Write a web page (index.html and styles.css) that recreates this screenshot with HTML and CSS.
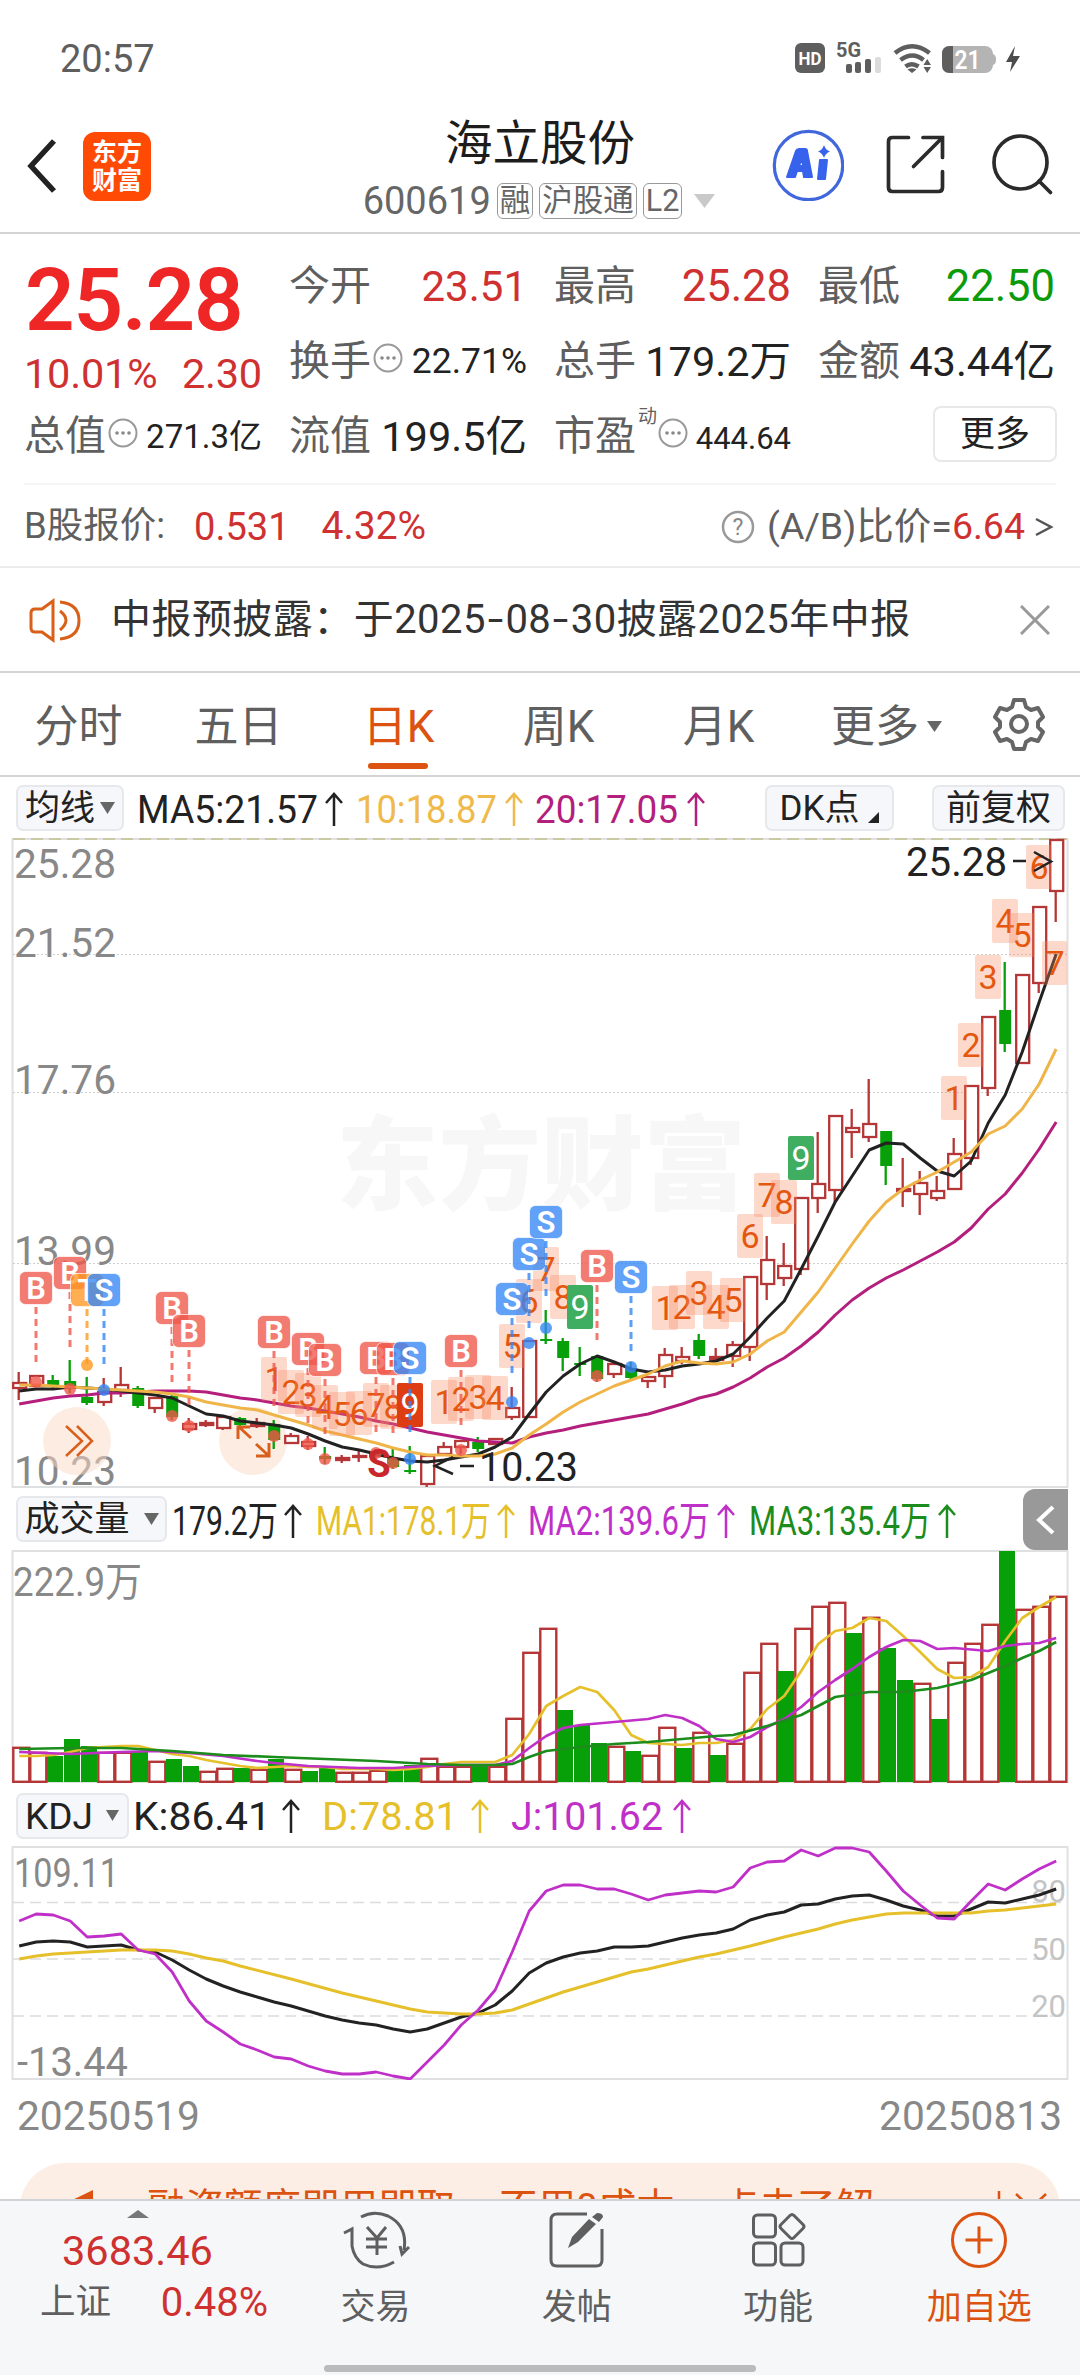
FILE: index.html
```html
<!DOCTYPE html>
<html lang="zh-CN">
<head>
<meta charset="utf-8">
<title>海立股份 600619</title>
<link rel="stylesheet" href="styles.css">
</head>
<body>
<div class="status">
  <span class="clock">20:57</span>
  <svg class="status-icons" width="232" height="36" viewBox="792 40 232 36">
    <rect x="795" y="43" width="30" height="30" rx="6" fill="#5e5e5e"/>
    <text x="810" y="65" font-size="19" font-weight="700" fill="#fff" text-anchor="middle" textLength="23" lengthAdjust="spacingAndGlyphs">HD</text>
    <text x="836" y="57" font-size="20" font-weight="700" fill="#5e5e5e" textLength="25" lengthAdjust="spacingAndGlyphs">5G</text>
    <g fill="#5e5e5e"><rect x="846" y="64" width="6" height="9" rx="2"/><rect x="855" y="62" width="6" height="11" rx="2"/><rect x="865" y="59" width="6" height="14" rx="2"/></g>
    <rect x="875" y="57" width="6" height="16" rx="2" fill="#dcdcdc"/>
    <g fill="none" stroke="#5e5e5e" stroke-width="4.500"><path d="M895 53q17-13.500 34.500 0M900.500 60q12-9 23 0"/><path d="M905.500 66.500q6-4.500 13 0"/></g>
    <path d="M907.500 69.500q4.500-2.500 9 0l-4.500 3.500zM923.500 65l3.700-6 3.800 6zM923.500 67h7.500l-3.800 6z" fill="#5e5e5e"/>
    <rect x="942" y="46" width="51" height="27" rx="8" fill="#b4b4b4"/><path d="M992 54q4 0 4 5.500t-4 5.500z" fill="#b4b4b4"/>
    <path d="M953 46v27h-3q-8 0-8-8v-11q0-8 8-8z" fill="#5e5e5e"/>
    <text x="967.500" y="69" font-size="26" font-weight="600" fill="#fff" text-anchor="middle" textLength="26" lengthAdjust="spacingAndGlyphs">21</text>
    <path d="M1015 46l-9 16h6l-2 10 10-16h-7z" fill="#4c4c4c"/>
  </svg>
</div>
<header class="header">
  <svg class="back" width="40" height="62" viewBox="0 0 40 62"><path d="M34 6L11 31l23 25" fill="none" stroke="#222" stroke-width="5.500"/></svg>
  <div class="logo"><span>东方</span><span>财富</span></div>
  <div class="title">
    <h1>海立股份</h1>
    <div class="code"><span>600619</span><i>融</i><i>沪股通</i><i>L2</i><svg width="24" height="16"><path d="M1 1h21l-10.500 14z" fill="#c9c9c9"/></svg></div>
  </div>
  <div class="actions">
    <svg width="72" height="72" viewBox="772 130 72 72"><circle cx="808.500" cy="166.500" r="34.200" fill="none" stroke="#4067dc" stroke-width="3.200"/>
      <g fill="#3762ec" stroke="#3762ec" stroke-width="2" stroke-linejoin="round"><path fill-rule="evenodd" d="M787 178l9-26q1-2 3-2h6q2 0 2 2l5 26h-8l-1-6h-6l-2 6zM799 167h4l-1-8zM820 161h7l-2 19h-7z"/></g><path d="M824 146q1.500 5 6 6.500-4.500 1.500-6 6.500-1.500-5-6-6.500 4.500-1.500 6-6.500z" fill="#3762ec"/></svg>
    <svg width="64" height="64" viewBox="885 135 64 64"><g fill="none" stroke="#2b2b2b" stroke-width="3.700" stroke-linecap="round"><path d="M909.500 139.500h-16q-4 0-4 4v46q0 4 4 4h46q4 0 4-4v-16"/><path d="M924 139.500h19.500v20M943 140l-28.500 28.500"/></g></svg>
    <svg width="68" height="68" viewBox="985 132 68 68"><g fill="none" stroke="#2b2b2b" stroke-width="3.700" stroke-linecap="round"><circle cx="1018.500" cy="163.500" r="26.500"/><path d="M1037 182l11.500 11.500"/></g></svg>
  </div>
</header>

<main>
<section class="quote">
  <div class="grid">
    <div class="price"><b>25.28</b><div class="chg"><span>10.01%</span><span>2.30</span></div></div>
    <div class="cell"><label>今开</label><span class="up">23.51</span></div>
    <div class="cell"><label>最高</label><span class="up full">25.28</span></div>
    <div class="cell"><label>最低</label><span class="down full">22.50</span></div>
    <div class="cell"><label>换手</label><svg class="dots" viewBox="0 0 30 30"><use href="#dots"/></svg><span class="mid">22.71%</span></div>
    <div class="cell"><label>总手</label><span class="wide">179.2万</span></div>
    <div class="cell"><label>金额</label><span class="wide">43.44亿</span></div>
    <div class="cell"><label>总值</label><svg class="dots" viewBox="0 0 30 30"><use href="#dots"/></svg><span class="cap">271.3亿</span></div>
    <div class="cell"><label>流值</label><span class="wide">199.5亿</span></div>
    <div class="cell"><label>市盈</label><sup>动</sup><svg class="dots" viewBox="0 0 30 30"><use href="#dots"/></svg><span class="small">444.64</span></div>
    <div class="cell end"><button class="more">更多</button></div>
  </div>
  <div class="bshare">
    <span>B股报价:</span><span class="up b1">0.531</span><span class="up b2">4.32%</span>
    <svg class="help" width="34" height="34" viewBox="0 0 34 34"><circle cx="17" cy="17" r="15" fill="none" stroke="#999" stroke-width="2.500"/><text x="17" y="25" font-size="23" fill="#888" text-anchor="middle">?</text></svg>
    <span class="ratio">(A/B)比价=<em>6.64</em></span>
    <svg width="20" height="24"><path d="M2 4l15 8-15 8" fill="none" stroke="#555" stroke-width="2.500"/></svg>
  </div>
</section>

<section class="notice">
  <svg width="54" height="48" viewBox="28 595 54 48"><g fill="none" stroke="#d86018" stroke-width="3"><path d="M53 600v39l-11-8h-7q-4 0-4-4v-15q0-4 4-4h7z"/><path d="M60 610q12 9 0 19M60 601q19 2 19 18.500T60 638"/></g></svg>
  <p>中报预披露：于2025<s>-</s>08<s>-</s>30披露2025年中报</p>
  <svg width="30" height="30"><path d="M1 1l28 28M29 1L1 29" stroke="#999" stroke-width="3"/></svg>
</section>

<nav class="tabs">
  <a>分时</a><a>五日</a><a class="on">日K</a><a>周K</a><a>月K</a><a>更多<svg width="16" height="13"><path d="M0 1h15l-7.500 11z" fill="#666"/></svg></a>
  <svg class="gear" width="58" height="58" viewBox="-29 -29 58 58"><g fill="none" stroke="#666" stroke-width="4" stroke-linejoin="round"><path d="M-5-24H5L7-17 12-14 19-16 24-7 19-2V3L24 8 19 17 12 15 7 18 5 25H-5L-7 18-12 15-19 17-24 8-19 3V-2L-24-7-19-16-12-14-7-17Z"/><circle r="8"/></g></svg>
</nav>

<div class="legend">
  <button class="pill w1">均线<svg width="15" height="13"><path d="M0 0h15l-7.500 12z" fill="#666"/></svg></button>
  <svg id="lg-ma" width="628" height="46" viewBox="131 785 628 46"></svg>
  <button class="pill w2">DK点<svg class="corner" width="11" height="11"><path d="M11 0v11H0z" fill="#222"/></svg></button>
  <button class="pill w3">前复权</button>
</div>
<svg class="panel" id="kline" width="1080" height="650" viewBox="0 839 1080 650"></svg>
<div class="legend vol">
  <button class="pill w4">成交量<svg width="15" height="13"><path d="M0 0h15l-7.500 12z" fill="#666"/></svg></button>
  <svg id="lg-vol" width="852" height="46" viewBox="171 1497 852 46"></svg>
  <div class="fold"><svg width="22" height="32"><path d="M18 3L4 16l14 13" fill="none" stroke="#fff" stroke-width="4"/></svg></div>
</div>
<svg class="panel" id="volume" width="1080" height="233" viewBox="0 1551 1080 233"></svg>
<div class="legend kdjl">
  <button class="pill w5">KDJ<svg width="14" height="12"><path d="M0 0h13l-6.500 11z" fill="#666"/></svg></button>
  <svg id="lg-kdj" width="900" height="46" viewBox="131 1794 900 46"></svg>
</div>
<svg class="panel" id="kdj" width="1080" height="234" viewBox="0 1847 1080 234"></svg>
<div class="dates"><span>20250519</span><span>20250813</span></div>
<div class="promo-clip"><div class="promo">
  <svg width="32" height="24"><path d="M0 16L31 1v22z" fill="#dc5210"/></svg>
  <span class="p1">融资额度即用即取，</span><span class="p2">不用0成本，</span><span class="p3">点击了解&gt;</span>
  <svg class="px" width="56" height="34"><path d="M3 2v30M20 5l30 28M50 5L20 33" stroke="#dc5210" stroke-width="2.500"/></svg>
</div></div>
</main>

<footer class="bottom">
  <div class="index"><svg width="22" height="8"><path d="M0 8L11 0l11 8z" fill="#777"/></svg><b>3683.46</b><div><span>上证</span><em>0.48%</em></div></div>
  <div class="item"><svg width="70" height="60" viewBox="340 2210 70 60"><g fill="none" stroke="#5f5f5f" stroke-width="3"><path d="M360 2217q13-7 27-1 20 10 16 34M343 2233l8-4v17q2 12 11 18 15 7 31-2M408 2247l-7 7-2-8"/><path d="M366 2227l10 11 9-11M376 2238v17M365 2239h21M365 2247h21"/></g></svg><span>交易</span></div>
  <div class="item"><svg width="60" height="60" viewBox="548 2210 60 60"><path d="M588 2214h-30q-6 0-6 6v40q0 6 6 6h39q6 0 6-6v-31" fill="none" stroke="#5f5f5f" stroke-width="3"/><path d="M569 2248l4-11 17-18 7 5-18 18zM593 2217l5-4q6 0 6 4l-4 5z" fill="#5f5f5f"/></svg><span>发帖</span></div>
  <div class="item"><svg width="60" height="60" viewBox="748 2210 60 60"><g fill="none" stroke="#5f5f5f" stroke-width="3"><rect x="753.500" y="2215" width="22" height="22" rx="4"/><rect x="753.500" y="2243" width="22" height="22" rx="4"/><rect x="781" y="2243" width="22" height="22" rx="4"/><path d="M790 2215.500q2-2 4 0l9 9q2 2 0 4l-9 9q-2 2-4 0l-9-9q-2-2 0-4z"/></g></svg><span>功能</span></div>
  <div class="item fav"><svg width="60" height="60" viewBox="949 2210 60 60"><g fill="none" stroke="#dc5210" stroke-width="3"><circle cx="979" cy="2240" r="26.500"/><path d="M965.500 2240h27M979 2226.500v27"/></g></svg><span>加自选</span></div>
  <div class="home"></div>
</footer>
<svg width="0" height="0" class="defs"><defs><g id="dots"><circle cx="15" cy="15" r="13.500" fill="none" stroke="#999" stroke-width="2"/><circle cx="9" cy="15" r="1.800" fill="#888"/><circle cx="15" cy="15" r="1.800" fill="#888"/><circle cx="21" cy="15" r="1.800" fill="#888"/></g></defs></svg>
<script src="charts.js"></script>
</body>
</html>
```
FILE: styles.css
```css
* { box-sizing: border-box; }
body { margin: 0; width: 1080px; height: 2376px; overflow: hidden; background: #fff; color: #222; font-family: Roboto, "Noto Sans CJK SC", sans-serif; line-height: 1; }
svg { display: block; flex: none; }
svg text { font-family: Roboto, "Noto Sans CJK SC", sans-serif; }
button { font: inherit; color: inherit; padding: 0; }
em, i { font-style: normal; }
.defs { display: none; }
.up, em { color: #cf3030; }
.down { color: #0a9a0a; }

.status { height: 96px; padding: 40px 56px 0 60px; display: flex; justify-content: space-between; }
.clock { font-size: 38px; color: #5e5e5e; }

.header { height: 138px; border-bottom: 2px solid #d4d4d4; display: grid; grid-template-columns: 290px 500px 290px; grid-template-areas: "l t a"; }
.header .back { grid-area: l; margin: 39px 0 0 20px; }
.logo { grid-area: l; margin: 36px 0 0 83px; width: 68px; height: 69px; border-radius: 12px; background: #ff4a05; color: #fff; font-size: 25px; font-weight: 700; display: flex; flex-direction: column; align-items: center; justify-content: center; gap: 3px; }
.title { grid-area: t; display: flex; flex-direction: column; align-items: center; }
.title h1 { margin: 24px 0 0; font-size: 47.500px; font-weight: 400; line-height: 48px; color: #1c1c1c; }
.code { display: flex; align-items: center; gap: 6px; margin: 14px 0 0 0; height: 38px; font-size: 38px; color: #666; }
.code i { font-size: 30.500px; line-height: 33px; height: 36px; padding: 0 2px; border: 1.500px solid #999; border-radius: 6px; white-space: nowrap; }
.code svg { margin-left: 5px; }
.actions { grid-area: a; display: flex; align-items: center; margin: 2px 25px 0 -18px; justify-content: space-between; }

.quote { height: 334px; padding: 0 24px; border-bottom: 2px solid #ebebeb; }
.grid { height: 251px; border-bottom: 2px solid #f5f5f5; padding: 15px 0 9px; display: grid; grid-template-columns: 238px 238px 237px 237px; column-gap: 27px; grid-template-rows: 75px 75px 75px; }
.price { grid-row: span 2; color: #cf3030; }
.price b { display: block; font-size: 87px; font-weight: 600; color: #ef2626; line-height: 88px; margin: 7px 0 0 1px; letter-spacing: -1.200px; }
.chg { display: flex; justify-content: space-between; font-size: 41.500px; margin-top: 9px; letter-spacing: -.2px; }
.cell { display: flex; align-items: center; font-size: 42px; min-width: 0; white-space: nowrap; }
.cell label { font-size: 41px; color: #5f5f5f; }
.cell > span { margin-left: auto; }
.cell .full { font-size: 43.500px; }
.cell .mid { font-size: 35.500px; }
.cell .cap { font-size: 33px; }
.cell .small { font-size: 31px; margin-top: 3px; }
.cell .wide { font-size: 41.500px; }
.dots { width: 30px; height: 30px; margin: -8px 0 0 2px; }
.cell sup { font-size: 19px; color: #5f5f5f; margin: -40px 0 0 2px; }
.cell sup + .dots { margin-left: 1px; }
.end { justify-content: flex-end; }
.more { width: 124px; height: 56px; margin: -5px -2px 0 0; border: 2px solid #e8e8e8; border-radius: 8px; background: #fff; font-size: 35px; color: #222; }
.bshare { height: 81px; display: flex; align-items: center; font-size: 39px; color: #5f5f5f; padding: 2px 2px 0 0; white-space: nowrap; }
.bshare span:first-child { font-size: 36.500px; }
.bshare .b1 { margin-left: 29px; font-size: 38px; }
.bshare .b2 { margin-left: 32px; }
.help { margin-left: auto; margin-right: 12px; }
.ratio { margin-right: 9px; font-size: 37.500px; }

.notice { height: 105px; border-bottom: 2px solid #d4d4d4; display: flex; align-items: center; padding: 0 30px 0 28px; }
.notice p { margin: 0 auto 0 29px; font-size: 40px; letter-spacing: .45px; color: #333; }
.notice s { display: inline-block; text-decoration: none; transform: scaleX(1.4); margin: 0 4px; }

.tabs { height: 104px; border-bottom: 2px solid #d4d4d4; display: grid; grid-template-columns: repeat(5, 160px) 170px auto; color: #5f5f5f; font-size: 44px; }
.tabs a { display: flex; justify-content: center; align-items: center; height: 103px; padding: 4px 3px 0 0; gap: 8px; white-space: nowrap; position: relative; }
.tabs a:nth-child(6) { margin-left: 7px; }
.tabs .on { color: #dc5210; }
.tabs .on::after { content: ""; position: absolute; left: 48px; bottom: 7px; width: 60px; height: 6px; border-radius: 3px; background: #dc5210; }
.tabs .gear { margin: 22px 0 0 20px; }

.legend { height: 61px; padding: 8px 16px 0; display: flex; }
.pill { height: 46px; background: #f6f7fa; border: 2px solid #e7e8ec; border-radius: 7px; display: flex; align-items: center; justify-content: center; font-size: 35px; color: #222; flex: none; white-space: nowrap; gap: 5px; }
.w1 { width: 108px; margin-right: 7px; }
.w2 { width: 129px; margin: 0 38px 0 6px; gap: 9px; }
.w3 { width: 133px; }
.corner { align-self: flex-end; margin-bottom: 6px; }
.vol { height: 62px; padding: 8px 12px 0 16px; }
.w4 { width: 151px; margin-right: 4px; gap: 14px; }
.fold { width: 45px; height: 61px; margin-top: -7px; background: #999; border-radius: 12px 0 0 12px; display: flex; align-items: center; justify-content: center; flex: none; }
.kdjl { height: 63px; padding-top: 10px; }
.w5 { width: 113px; margin-right: 2px; gap: 13px; font-size: 37px; }
.dates { height: 83px; padding: 16px 18px 0 17px; display: flex; justify-content: space-between; font-size: 40.700px; color: #888; }
.promo-clip { height: 36px; overflow: hidden; padding: 0 20px; }
.promo { height: 90px; border-radius: 48px; background: #fceee5; color: #dc5210; display: flex; align-items: flex-start; padding: 26px 8px 0 42px; font-size: 38.500px; white-space: nowrap; }
.p1 { margin-left: 53px; width: 352px; }
.p2 { width: 229px; }
.promo .p3 { margin-left: -8px; }
.px { margin-left: auto; }

.bottom { height: 176px; background: #f6f7f9; border-top: 2px solid #d0d2d5; position: relative; display: grid; grid-template-columns: 275px repeat(4, 201.200px); }
.index { display: flex; flex-direction: column; align-items: center; padding-top: 9px; color: #cf3030; }
.index b { font-weight: 400; font-size: 41.500px; margin-top: 12px; }
.index div { display: flex; justify-content: space-between; align-items: center; width: 228px; margin: 11px -33px 0 40px; font-size: 40px; align-self: flex-start; }
.index span { color: #5f5f5f; font-size: 35.500px; }
.item { display: flex; flex-direction: column; align-items: center; padding-top: 9px; font-size: 35px; color: #5f5f5f; }
.item span { margin-top: 20px; }
.fav { color: #dc5210; }
.home { position: absolute; left: 324px; bottom: 3px; width: 432px; height: 7px; border-radius: 4px; background: #b9bbbd; }
```
FILE: charts.js
```js
var STEP = 17, X0 = 19.2;
var RED = '#b53636', GREEN = '#08a008', BLACK = '#222';
function x(i) { return X0 + STEP * i; }
function text(s, tx, y, w, size, fill, extra) {
  return '<text x="' + tx + '" y="' + y + '" font-size="' + size + '" fill="' + fill + '"' +
    (w ? ' textLength="' + w + '" lengthAdjust="spacingAndGlyphs"' : '') + ' ' + (extra || '') + '>' + s + '</text>';
}
function path(d, stroke, w, extra) {
  return '<path d="' + d + '" fill="none" stroke="' + stroke + '" stroke-width="' + w + '" ' + (extra || '') + '/>';
}
function line(pts, color, w) {
  return path('M' + pts.map(function (p) { return x(p[0]) + ' ' + p[1]; }).join('L'), color, w || 3, 'stroke-linejoin="round"');
}
function series(arr) { return arr.map(function (v, i) { return [i, v]; }); }
function arrow(cx, top, bottom, color) {
  return path('M' + cx + ' ' + bottom + 'V' + (top + 1) + 'M' + (cx - 8) + ' ' + (top + 10) + 'L' + cx + ' ' + (top + 1) + 'L' + (cx + 8) + ' ' + (top + 10), color, 2.5);
}
function put(id, s) { document.getElementById(id).innerHTML = s; }
function frame(y, h) { return '<rect x="12.5" y="' + y + '" width="1055" height="' + h + '" fill="none" stroke="#dfe0e2" stroke-width="2"/>'; }

/* legends */
function legend(id, items, base, size) {
  put(id, items.map(function (t) {
    return text(t[0], t[1], base, t[2], size, t[4]) + arrow(t[3], base - 30, base + 3, t[4]);
  }).join(''));
}
legend('lg-ma', [['MA5:21.57', 137, 181, 334, BLACK], ['10:18.87', 356, 141, 514, '#efba4b'], ['20:17.05', 535, 143, 696, '#b41e7c']], 823, 38);
legend('lg-vol', [['179.2万', 172, 106, 293, BLACK], ['MA1:178.1万', 316, 175, 506, '#e5c02a'], ['MA2:139.6万', 528, 182, 726, '#c030c8'], ['MA3:135.4万', 749, 182, 947, '#1c8c1c']], 1536, 40);
legend('lg-kdj', [['K:86.41', 133, 138, 291, BLACK], ['D:78.81', 322, 136, 480, '#e5c02a'], ['J:101.62', 511, 152, 682, '#c030c8']], 1831, 39);

/* candles: colour, high, body top, body bottom, low */
var candles = [['r',1373,1384,1389,1401],['r',1377,1377,1387,1387],['g',1376,1381,1386,1389],['g',1361,1382,1390,1394],['g',1378,1398,1404,1406],['r',1379,1393,1403,1407],['r',1368,1386,1391,1398],['g',1387,1389,1407,1409],['r',1398,1399,1409,1414],['g',1395,1397,1418,1421],['r',1419,1425,1430,1434],['r',1421,1424,1426,1428],['r',1417,1418,1429,1431],['g',1418,1419,1426,1429],['r',1419,1424,1427,1429],['g',1421,1425,1441,1450],['r',1434,1437,1444,1445],['r',1437,1443,1447,1451],['g',1448,1457,1460,1465],['r',1456,1459,1461,1464],['r',1452,1457,1458,1463],['r',1450,1453,1457,1460],['g',1448,1459,1468,1470],['g',1447,1471,1473,1475],['r',1457,1457,1485,1488],['r',1443,1448,1455,1456],['r',1441,1442,1448,1455],['g',1438,1443,1450,1453],['r',1439,1440,1445,1446],['r',1388,1409,1418,1421],['r',1342,1342,1418,1418],['g',1311,1340,1342,1345],['g',1339,1342,1359,1372],['g',1348,1364,1366,1377],['g',1356,1357,1380,1383],['r',1363,1365,1375,1379],['g',1363,1369,1379,1381],['r',1377,1378,1382,1389],['r',1349,1356,1377,1389],['r',1348,1358,1362,1365],['g',1335,1341,1357,1360],['r',1349,1358,1361,1363],['r',1342,1346,1357,1368],['r',1278,1278,1348,1362],['r',1237,1261,1285,1301],['r',1244,1267,1279,1287],['r',1198,1199,1270,1276],['r',1133,1185,1199,1214],['r',1117,1117,1191,1203],['r',1110,1129,1133,1159],['r',1080,1125,1138,1143],['g',1132,1132,1167,1186],['r',1159,1190,1192,1208],['r',1172,1184,1195,1216],['r',1177,1192,1199,1202],['r',1139,1155,1190,1190],['r',1087,1087,1159,1166],['r',1018,1018,1089,1097],['g',963,1011,1045,1053],['r',976,976,1064,1064],['r',908,908,984,994],['r',841,841,892,923]];
function candle(c, i) {
  var cx = x(i), col = c[0] === 'r' ? RED : GREEN;
  var s = path('M' + (cx - .5) + ' ' + c[1] + 'V' + c[2] + 'M' + (cx - .5) + ' ' + c[3] + 'V' + c[4], col, 2.3);
  if (c[0] === 'g') return s + '<rect x="' + (cx - 6) + '" y="' + c[2] + '" width="12" height="' + (c[3] - c[2]) + '" fill="' + col + '"/>';
  return s + '<rect x="' + (cx - 6) + '" y="' + c[2] + '" width="13" height="' + (c[3] - c[2]) + '" fill="' + (c[3] - c[2] > 3 ? '#fff' : col) + '" stroke="' + col + '" stroke-width="2.3"/>';
}
var ma5 = [1392,1390,1390,1388,1389,1390,1392,1394,1396,1399,1407,1415,1417,1422,1424,1426,1429,1435,1442,1448,1451,1455,1459,1462,1463,1461,1458,1455,1448,1438,1415,1393,1377,1365,1357,1363,1370,1373,1371,1367,1365,1362,1355,1338,1319,1302,1270,1237,1203,1177,1151,1144,1145,1159,1172,1177,1162,1124,1096,1053,1003,955];
var ma10 = [1386,1386,1387,1388,1389,1390,1391,1392,1393,1395,1398,1403,1406,1409,1411,1416,1421,1426,1432,1436,1440,1444,1449,1453,1456,1456,1457,1457,1455,1449,1436,1425,1413,1403,1395,1387,1381,1375,1367,1362,1364,1365,1363,1355,1342,1333,1313,1293,1269,1245,1222,1203,1190,1181,1173,1163,1153,1135,1127,1110,1085,1050];
var ma20 = [1405,1402,1399,1397,1396,1394,1394,1393,1392,1392,1392,1393,1396,1399,1401,1404,1407,1409,1412,1415,1418,1422,1425,1429,1433,1436,1439,1442,1443,1444,1438,1434,1431,1427,1424,1421,1418,1415,1410,1405,1399,1395,1388,1379,1368,1359,1347,1333,1316,1301,1289,1279,1271,1262,1253,1243,1229,1210,1195,1174,1150,1123];

/* sequence counters: digit, centre x, centre y */
var seq = [[1,274,1380],[2,291,1393],[3,308,1396],[4,325,1408],[5,342,1415],[6,359,1414],[7,376,1406],[8,393,1408],[1,444,1403],[2,461,1400],[3,478,1398],[4,495,1399],[5,512,1347],[6,529,1302],[7,546,1270],[8,563,1298],[1,665,1309],[2,682,1308],[3,699,1294],[4,716,1308],[5,733,1301],[6,750,1237],[7,767,1196],[8,784,1203],[1,954,1099],[2,971,1046],[3,988,978],[4,1005,922],[5,1022,936],[6,1039,868],[7,1055,964]];
var nines = [[410,1406,'#de3c12'],[580,1308,'#3fae60'],[801,1159,'#3fae60']];
/* trade marks: letter, x, y, end of the dashed stem, dot y */
var marks = [['B',36,1289,1364,1383],['B',70,1274,1350,1390],['T',87,1291,1366,1366],['S',104,1291,1366,1391],['B',172,1309,1384,1417],['B',189,1332,1407,1427],['B',274,1333,1408,1437],['B',308,1350,1426,1445],['B',325,1361,1437,1460],['B',376,1359,1434,1454],['B',393,1360,1436,1464],['S',410,1359,1434,1460],['B',461,1352,1427,1451],['S',512,1300,1376,1403],['S',529,1255,1330,1344],['S',546,1223,1298,1329],['B',597,1267,1343,1377],['S',631,1278,1354,1368]];
var tint = { B: '#f0574a', S: '#3586f5', T: '#ff9820' };

var s = text('东方财富', 336, 1203, 410, 102, '#f7f7f7', 'font-weight="900"') + frame(840, 648);
[955.5, 1093.5, 1264.5].forEach(function (y) { s += path('M13 ' + y + 'H1067', '#cfcfcf', 1, 'stroke-dasharray="2 2"'); });
s += path('M13 840H1067', '#c9c9a4', 2, 'stroke-dasharray="12 6"');
[['25.28', 879], ['21.52', 958], ['17.76', 1095], ['13.99', 1266], ['10.23', 1486]].forEach(function (a) { s += text(a[0], 14, a[1], 102, 40, '#888'); });
s += '<g fill="#fbd9c6" fill-opacity=".5"><circle cx="77" cy="1442" r="34"/><circle cx="253" cy="1442" r="34"/></g>';
s += candles.map(candle).join('');
s += line(series(ma20), '#b41e7c') + line(series(ma5), BLACK) + line(series(ma10), '#efb548');
s += path('M66 1427l16 15-16 15M77 1427l15 15-15 15', '#d9601c', 2.5);
s += path('M238 1440v-12h12M239 1428l12 11M256 1445l13 12M269 1444v13h-13', '#d9601c', 3);
s += seq.map(function (n) {
  return '<rect x="' + (n[1] - 13) + '" y="' + (n[2] - 22) + '" width="' + (n[1] > 1050 ? 25 : 26) + '" height="44" rx="2" fill="#fa8a60" fill-opacity=".32"/>' + text(n[0], n[1], n[2] + 12, 0, 34, '#e4570f', 'text-anchor="middle"');
}).join('');
s += nines.map(function (n) {
  return '<rect x="' + (n[0] - 13) + '" y="' + (n[1] - 22) + '" width="26" height="44" rx="2" fill="' + n[2] + '"/>' + text(9, n[0], n[1] + 12, 0, 34, '#fff', 'text-anchor="middle"');
}).join('');
s += marks.map(function (m) {
  var c = tint[m[0]];
  return path('M' + m[1] + ' ' + (m[2] + 19) + 'V' + m[3], c, 3, 'stroke-dasharray="7 5" stroke-opacity=".8"') +
    '<circle cx="' + m[1] + '" cy="' + m[4] + '" r="6" fill="' + c + '" fill-opacity=".8"/>' +
    '<rect x="' + (m[1] - 16.5) + '" y="' + (m[2] - 16.5) + '" width="33" height="33" rx="6" fill="' + c + '" fill-opacity=".78" stroke="#fff" stroke-opacity=".7" stroke-width="1"/>' +
    text(m[0], m[1], m[2] + 11, 0, 31, '#fff', 'text-anchor="middle" font-weight="600"');
}).join('');
s += text('S', 379, 1478, 0, 38, '#c8282c', 'text-anchor="middle" font-weight="700"');
s += text('25.28', 906, 877, 101, 40, BLACK) + path('M1013 862h13M1034 853l17 9.500-17 9.500', BLACK, 2.5);
s += text('10.23', 479, 1482, 99, 40, BLACK) + path('M460 1467h14M453 1458l-18 9 18 8', BLACK, 2.5);
put('kline', s);

/* volume bars: colour + top */
var vols = 'r1748 r1753 g1757 g1740 g1747 r1753 r1753 g1753 r1762 g1760 g1767 r1772 r1769 g1769 r1770 g1760 r1770 g1772 g1769 r1773 r1773 r1771 g1771 g1766 r1759 r1767 r1767 g1766 r1767 r1719 r1653 r1629 g1711 g1726 g1744 r1747 g1752 r1756 r1728 g1749 r1733 g1756 r1744 r1673 r1644 g1672 r1629 r1607 r1603 g1634 r1618 g1649 g1681 r1684 g1720 r1663 r1644 r1625 g1552 r1610 r1607 r1597'.split(' ');
s = frame(1552, 231) + vols.map(function (v, i) {
  var top = +v.slice(1), left = 12.5 + STEP * i;
  return v[0] === 'g' ? '<rect x="' + (left + .5) + '" y="' + top + '" width="16" height="' + (1783 - top) + '" fill="' + GREEN + '"/>'
    : '<rect x="' + (left + .8) + '" y="' + (top + .8) + '" width="16" height="' + (1782 - top) + '" fill="#fff" stroke="' + RED + '" stroke-width="2.4"/>';
}).join('') + text('222.9万', 13, 1597, 129, 40, '#888');
s += line(series([1757,1757,1756,1753,1749,1748,1747,1747,1751,1755,1757,1761,1764,1767,1769,1768,1767,1768,1768,1770,1770,1770,1771,1770,1768,1765,1763,1763,1763,1756,1735,1707,1697,1688,1693,1711,1736,1744,1745,1746,1744,1744,1741,1730,1710,1697,1672,1645,1632,1629,1619,1622,1637,1653,1670,1679,1678,1668,1642,1619,1608,1598]), '#e5c02a', 2.7);
s += line([[0,1753],[3,1755],[6,1753],[8,1752],[10,1754],[12,1757],[14,1762],[15,1764],[17,1767],[20,1769],[22,1769],[24,1767],[26,1766],[28,1766],[29,1762],[30,1749],[31,1737],[32,1729],[33,1726],[35,1723],[37,1720],[38,1716],[39,1719],[40,1727],[41,1740],[42,1743],[43,1738],[44,1728],[45,1720],[46,1708],[47,1693],[48,1681],[49,1670],[50,1658],[51,1648],[52,1641],[53,1642],[54,1650],[55,1649],[57,1652],[58,1647],[59,1645],[60,1644],[61,1639]], '#c030c8', 2.7);
s += line([[0,1750],[3,1749],[6,1749],[9,1752],[12,1756],[15,1758],[18,1760],[21,1762],[24,1765],[26,1766],[28,1766],[29,1765],[30,1758],[31,1752],[33,1748],[35,1745],[37,1743],[39,1740],[41,1737],[42,1736],[44,1727],[46,1716],[48,1698],[50,1693],[52,1693],[54,1689],[56,1681],[57,1674],[58,1667],[59,1659],[60,1652],[61,1643]], '#1c8c1c', 2.7);
put('volume', s);

/* KDJ */
s = frame(1848, 232);
[1903.5, 1960, 2017].forEach(function (y) { s += path('M13 ' + y + 'H1067', '#dcdcdc', 1.5, 'stroke-dasharray="11 6"'); });
s += text('109.11', 14, 1888, 105, 40, '#888') + text('-13.44', 17, 2077, 111, 40, '#888');
[['80', 1903], ['50', 1961], ['20', 2018]].forEach(function (a) { s += text(a[0], 1066, a[1], 0, 31, '#c4c4c4', 'text-anchor="end"'); });
s += line(series([1947,1943,1942,1943,1948,1947,1946,1951,1953,1961,1971,1980,1987,1993,1998,2003,2007,2012,2017,2021,2024,2026,2030,2033,2030,2024,2018,2014,2006,1992,1974,1964,1958,1954,1952,1948,1948,1947,1943,1939,1936,1934,1930,1921,1916,1913,1906,1905,1900,1897,1896,1901,1907,1911,1917,1917,1910,1903,1904,1900,1896,1890]), BLACK);
s += line([[0,1960],[1,1957],[2,1955],[3,1954],[4,1953],[6,1951],[8,1951],[9,1952],[10,1955],[11,1959],[12,1962],[13,1967],[16,1980],[19,1994],[22,2006],[23,2010],[24,2013],[26,2015],[27,2015],[28,2014],[29,2011],[30,2005],[31,1999],[32,1993],[34,1983],[36,1973],[37,1970],[40,1958],[41,1955],[43,1947],[45,1938],[47,1930],[48,1925],[49,1921],[50,1918],[51,1915],[52,1914],[56,1914],[57,1912],[58,1911],[59,1909],[60,1907],[61,1905]], '#e5c02a');
s += line(series([1922,1915,1916,1922,1938,1937,1935,1951,1955,1973,2002,2022,2033,2045,2051,2058,2060,2067,2072,2075,2075,2073,2077,2080,2063,2046,2026,2011,1991,1953,1912,1892,1886,1886,1890,1890,1895,1901,1896,1894,1892,1893,1888,1869,1863,1862,1851,1857,1849,1849,1853,1872,1892,1906,1919,1920,1902,1885,1891,1880,1870,1862]), '#c030c8', 2.8);
put('kdj', s);
```
